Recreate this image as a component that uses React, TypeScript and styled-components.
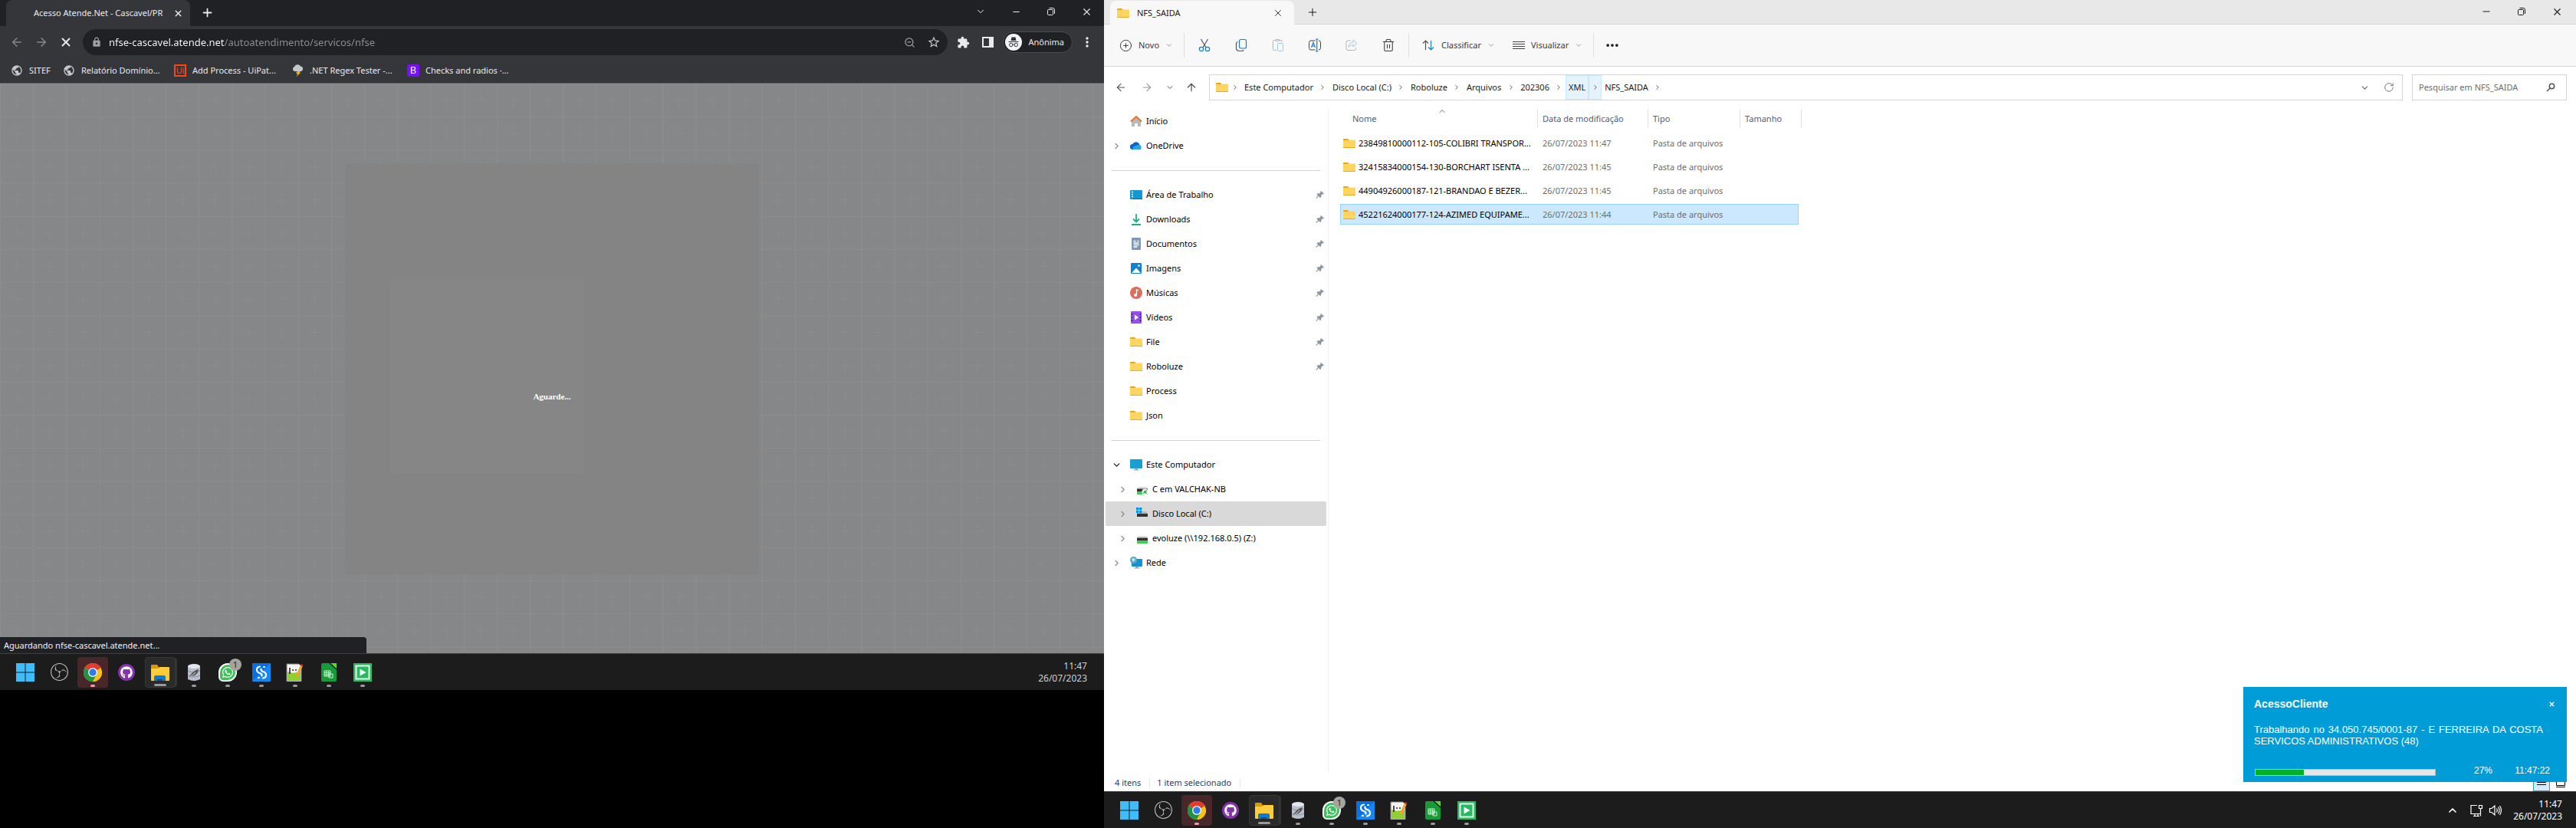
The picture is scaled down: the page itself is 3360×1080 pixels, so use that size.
import React, { ReactNode } from "react";
import styled, { createGlobalStyle, css } from "styled-components";
import {
  ArrowLeft,
  ArrowRight,
  ArrowUp,
  ChevronDown,
  ChevronRight,
  ChevronUp,
  CirclePlus,
  Ellipsis,
  Minus,
  Plus,
  RotateCw,
  Trash2,
  X,
  ZoomOut,
} from "lucide-react";
import { MdExtension, MdLock, MdMoreVert, MdPublic, MdStarBorder } from "react-icons/md";
import { FaGithub, FaWhatsapp } from "react-icons/fa";
import { SiObsstudio } from "react-icons/si";

const ui = '"Noto Sans", "Open Sans", sans-serif';
const arial = '"Liberation Sans", Arial, sans-serif';

const GlobalStyle = createGlobalStyle`
  *, *::before, *::after { box-sizing: border-box; }
  body { margin: 0; background: #000; font: 11px/16px ${ui}; }
  button, input { margin: 0; padding: 0; border: 0; background: none; color: inherit; font: inherit; }
  svg { display: block; flex: none; }
  a { color: inherit; text-decoration: none; }
`;

/* ---------- desktop ---------- */

const Desktop = styled.main`
  display: grid;
  grid-template-columns: 3fr 4fr;
  align-items: start;
`;

const Screen = styled.section<{ $ratio: string }>`
  position: relative;
  display: flex;
  flex-direction: column;
  min-width: 0;
  aspect-ratio: ${(p) => p.$ratio};
`;

/* ---------- shared ---------- */

const IconButton = styled.button<{ $w?: number }>`
  display: flex;
  align-items: center;
  justify-content: center;
  width: ${(p) => p.$w ?? 32}px;
  height: 32px;
  flex: none;
`;

const Spacer = styled.div`
  flex: 1;
`;

/* ---------- browser ---------- */

const Browser = styled.article`
  flex: 1;
  display: flex;
  flex-direction: column;
  min-height: 0;
  background: #35363a;
  color: #e8eaed;
`;

const TabStrip = styled.header`
  display: flex;
  height: 34px;
  padding-left: 8px;
  background: #202124;
`;

const BrowserTab = styled.div`
  display: flex;
  align-items: center;
  width: 240px;
  padding: 0 4px 0 36px;
  border-radius: 8px 8px 0 0;
  background: #35363a;
`;

const TabTitle = styled.span`
  flex: 1;
  white-space: nowrap;
`;

const WindowControls = styled.div<{ $pad: number }>`
  display: flex;
  height: 30px;
  padding-right: ${(p) => p.$pad}px;
  align-items: center;
`;

const BrowserBar = styled.div`
  display: flex;
  align-items: center;
  height: 42px;
  padding: 0 6px;
`;

const Omnibox = styled.form`
  flex: 1;
  display: flex;
  align-items: center;
  height: 34px;
  margin: 0 4px 0 6px;
  padding: 0 2px 0 11px;
  border-radius: 17px;
  background: #202124;
  color: #9aa0a6;
`;

/* host in white, path dimmed */
const UrlInput = styled.input`
  flex: 1;
  min-width: 0;
  height: 32px;
  margin-left: 9px;
  outline: 0;
  font-size: 13px;
  background: linear-gradient(90deg, #fff 0 150px, #8d9196 150px);
  background-clip: text;
  -webkit-background-clip: text;
  color: transparent;
`;

const Profile = styled.button`
  display: flex;
  align-items: center;
  gap: 8px;
  height: 28px;
  margin: 0 3px 0 4px;
  padding: 0 10px 0 2px;
  border: 1px solid #4a4b4f;
  border-radius: 14px;
  background: #202124;
`;

const Bookmarks = styled.nav`
  display: flex;
  height: 33px;
  padding: 0 14px;
  align-items: center;
  border-bottom: 1px solid #5c5d60;
`;

const Bookmark = styled.a<{ $w: number }>`
  display: flex;
  align-items: center;
  gap: 8px;
  width: ${(p) => p.$w}px;
  white-space: nowrap;
`;

const Page = styled.div`
  position: relative;
  flex: 1;
  display: flex;
  align-items: center;
  justify-content: center;
  overflow: hidden;
  background: #868788;
`;

const Backdrop = styled.svg`
  position: absolute;
  inset: 0;
  width: 100%;
  height: 100%;
`;

const LoadingPanel = styled.div`
  position: relative;
  display: flex;
  align-items: center;
  justify-content: center;
  width: 540px;
  height: 536px;
  background: linear-gradient(#868686, #868686) 59px 151px / 253px 254px no-repeat #848484;
`;

const LoadingText = styled.p`
  margin: 0;
  padding-top: 72px;
  color: #fff;
  font: bold 11px/16px "Liberation Serif", serif;
`;

const LoadStatus = styled.output`
  position: absolute;
  left: 0;
  bottom: 0;
  width: 478px;
  height: 21px;
  padding: 0 5px;
  border-top-right-radius: 4px;
  background: #202124;
  color: #f1f1f1;
  line-height: 21px;
`;

/* ---------- taskbar ---------- */

const Bar = styled.footer`
  display: flex;
  align-items: center;
  height: 48px;
  flex: none;
  padding: 0 18px 0 13px;
  border-top: 1px solid #3f3f3f;
  background: #1c1c1c;
  color: #fff;
`;

const Apps = styled.nav`
  display: flex;
  gap: 4px;
`;

const AppButton = styled.button<{ $tint?: string; $stack?: boolean }>`
  position: relative;
  display: flex;
  align-items: center;
  justify-content: center;
  width: 40px;
  height: 40px;
  border-radius: 4px;
  background: ${(p) => p.$tint ?? "transparent"};
  ${(p) => p.$stack && css`border: 1px solid #383838; box-shadow: 3px 0 0 -1px #333;`}
`;

const Running = styled.i<{ $color?: string; $wide?: boolean }>`
  position: absolute;
  bottom: 1px;
  width: ${(p) => (p.$wide ? 16 : 6)}px;
  height: 3px;
  border-radius: 2px;
  background: ${(p) => p.$color ?? "#9a9a9a"};
`;

const Badge = styled.b`
  position: absolute;
  top: 2px;
  right: 2px;
  width: 16px;
  height: 16px;
  border-radius: 8px;
  background: #a3a3a0;
  color: #222;
  font-weight: 400;
`;

const Tray = styled.div`
  display: flex;
  align-items: center;
  gap: 6px;
  margin-right: 14px;
`;

const TrayToggle = styled.button`
  margin-right: 9px;
`;

const Clock = styled.time<{ $dim?: boolean }>`
  color: ${(p) => (p.$dim ? "#cfcfcf" : "#fff")};
  font-size: 12px;
  text-align: right;
  margin-right: ${(p) => (p.$dim ? 4 : 0)}px;
`;

/* ---------- file explorer ---------- */

const Explorer = styled.article`
  flex: 1;
  display: flex;
  flex-direction: column;
  min-height: 0;
  background: #fff;
  color: #1b1b1b;
`;

const ExplorerTabs = styled.header`
  display: flex;
  height: 32px;
  padding-left: 8px;
  background: #e8e8e8;
  box-shadow: inset 0 -1px #d6d6d6;
`;

const ExplorerTab = styled.div`
  display: flex;
  align-items: center;
  gap: 10px;
  width: 240px;
  margin-top: 1px;
  padding: 0 5px 0 9px;
  border-radius: 8px 8px 0 0;
  background: #f8f8f8;
`;

const CommandBar = styled.div`
  display: flex;
  align-items: center;
  height: 55px;
  padding-left: 20px;
  border-bottom: 1px solid #d6d6d6;
  background: #f8f8f8;
`;

const Command = styled.button<{ $w: number }>`
  display: flex;
  align-items: center;
  gap: 8px;
  width: ${(p) => p.$w}px;
  height: 32px;
  color: #3a3a3a;
`;

const CommandSeparator = styled.div`
  width: 1px;
  height: 32px;
  background: #dedede;
`;

const IconCommands = styled.div`
  display: flex;
  gap: 16px;
  padding: 0 10px;
`;

const ViewCommands = styled.div`
  display: flex;
  padding-left: 16px;
`;

const AddressRow = styled.div`
  display: flex;
  padding: 10px 12px 10px 6px;
  gap: 12px;
`;

const NavButtons = styled.div`
  display: flex;
  align-items: center;
  width: 119px;
`;

const AddressBar = styled.nav`
  flex: 1;
  display: flex;
  align-items: center;
  height: 34px;
  padding: 0 1px 0 8px;
  border: 1px solid #d6d6d6;
`;

const Crumb = styled.a<{ $on?: boolean }>`
  padding: 0 4px;
  line-height: 32px;
  ${(p) => p.$on && css`background: #e5f3ff; box-shadow: inset 0 0 0 1px #cce8ff;`}
`;

const CrumbArrow = styled.button<{ $on?: boolean }>`
  display: flex;
  align-items: center;
  justify-content: center;
  width: 17px;
  height: 32px;
  ${(p) => p.$on && css`background: #e5f3ff; box-shadow: inset 0 0 0 1px #cce8ff;`}
`;

const Search = styled.form`
  display: flex;
  align-items: center;
  width: 202px;
  padding: 0 14px 0 8px;
  border: 1px solid #d6d6d6;
`;

const SearchInput = styled.input`
  flex: 1;
  min-width: 0;
  outline: 0;
  &::placeholder { color: #6d6d6d; opacity: 1; }
`;

const Body = styled.div`
  flex: 1;
  display: flex;
  min-height: 0;
  padding-top: 1px;
`;

const Sidebar = styled.nav`
  width: 293px;
  flex: none;
  border-right: 1px solid #f0f0f0;
`;

const TreeRow = styled.button<{ $child?: boolean; $on?: boolean }>`
  display: flex;
  align-items: center;
  width: 288px;
  height: 32px;
  margin-left: 2px;
  padding: 0 2px 0 ${(p) => (p.$child ? 16 : 8)}px;
  border-radius: 2px;
  background: ${(p) => (p.$on ? "#d9d9d9" : "transparent")};
  color: #000;
`;

const TreeArrow = styled.span`
  width: 24px;
`;

const TreeLabel = styled.span`
  flex: 1;
  margin-left: 5px;
  text-align: left;
`;

const TreeDivider = styled.hr`
  height: 1px;
  margin: 16px 10px 15px;
  border: 0;
  background: #d2d2d2;
`;

const Files = styled.div`
  flex: 1;
  padding-left: 15px;
`;

const FileTable = styled.table`
  display: block;
`;

const Group = styled.thead`
  display: block;
`;

const Rows = styled.tbody`
  display: block;
`;

const columns = css`
  display: grid;
  grid-template-columns: 258px 144px 120px 1fr;
`;

const HeadRow = styled.tr`
  ${columns}
  width: 602px;
  margin-bottom: 6px;
`;

const Head = styled.th<{ $first?: boolean }>`
  position: relative;
  height: 25px;
  padding: 0 0 0 ${(p) => (p.$first ? 16 : 6)}px;
  border-right: 1px solid #e2e2e2;
  color: #4c607a;
  font-weight: 400;
  line-height: 26px;
  text-align: left;
`;

const SortMark = styled(ChevronUp)`
  position: absolute;
  top: -3px;
  left: 127px;
`;

const FileRow = styled.tr<{ $on?: boolean }>`
  ${columns}
  width: 598px;
  height: 27px;
  margin-bottom: 4px;
  ${(p) => p.$on && css`background: #cce8ff; box-shadow: inset 0 0 0 1px #99d1ff;`}
`;

const NameCell = styled.td`
  display: flex;
  align-items: center;
  gap: 4px;
  padding: 0 0 0 4px;
  color: #000;
  white-space: nowrap;
`;

const DataCell = styled.td`
  padding: 0 0 0 6px;
  color: #6d6d6d;
  line-height: 27px;
`;

const StatusBar = styled.div`
  display: flex;
  align-items: center;
  height: 24px;
  padding: 2px 9px 0 14px;
  color: #26406b;
`;

const StatusItem = styled.span`
  margin-right: 9px;
  padding-right: 11px;
  border-right: 1px solid #e6e6e6;
  line-height: 12px;
`;

const ViewButton = styled.button<{ $on?: boolean }>`
  display: flex;
  align-items: center;
  justify-content: center;
  width: 22px;
  height: 22px;
  margin-left: 3px;
  ${(p) => p.$on && css`border: 1px solid #26a0da; background: #d5ecf8;`}
`;

/* ---------- toast ---------- */

const Toast = styled.aside`
  position: absolute;
  right: 12px;
  bottom: 60px;
  width: 422px;
  height: 124px;
  padding: 14px 15px 10px 14px;
  background: #009cd8;
  color: #fff;
  font: 13px/15px ${arial};
`;

const ToastHead = styled.div`
  display: flex;
  align-items: center;
  justify-content: space-between;
`;

const ToastTitle = styled.h2`
  margin: 0;
  font: bold 14px/16px ${arial};
`;

const ToastText = styled.p`
  margin: 18px 16px 0 0;
  text-align: justify;
`;

const ToastFoot = styled.div`
  display: flex;
  align-items: center;
  margin-top: 24px;
  padding-right: 7px;
  font-size: 12px;
`;

const Progress = styled.div`
  width: 236px;
  height: 9px;
  margin: 4px 50px 0 1px;
  border: 1px solid #bcbcbc;
  background: #e6e6e6;
`;

const ProgressFill = styled.div`
  height: 100%;
  background: #06b025;
`;

/* ---------- drawings ---------- */

const Folder = ({ size = 16 }: { size?: number }) => (
  <svg width={size} height={size} viewBox="0 0 16 16">
    <path d="M0 3a1 1 0 0 1 1-1h5l2 2.500H0z" fill="#f2a50c" />
    <path d="M0 4.500h7l1-1h7a1 1 0 0 1 1 1V13a1 1 0 0 1-1 1H1a1 1 0 0 1-1-1z" fill="#ffd562" />
    <path d="M0 13a1 1 0 0 0 1 1h14a1 1 0 0 0 1-1z" fill="#eeaa1f" />
  </svg>
);

const Restore = () => (
  <svg width="12" height="12" viewBox="0 0 12 12" fill="none" stroke="currentColor">
    <rect x="1.500" y="3.500" width="7" height="7" rx="1" />
    <path d="M3.500 1.500H8a2.500 2.500 0 0 1 2.500 2.500v5" />
  </svg>
);

const Pin = () => (
  <svg width="12" height="12" viewBox="0 0 12 12" fill="#8b979e">
    <path d="M7 1l4 3.500-1 .8-.8-.2L7.300 7l-.3 2.500-1 .5-2-2L1 11l-.8-.3L3 7 1.500 5.500l.6-.9L5 4.200l1.700-1.700-.3-.8z" />
  </svg>
);

const SidePanel = () => (
  <svg width="15" height="14" viewBox="0 0 15 14">
    <rect width="15" height="14" fill="#e8eaed" />
    <rect x="2" y="2" width="7" height="10" fill="#35363a" />
  </svg>
);

const Incognito = () => (
  <svg width="22" height="22" viewBox="0 0 22 22">
    <circle cx="11" cy="11" r="11" fill="#f1f3f4" />
    <path d="M7.500 9L8.500 4.500h5L14.500 9z" fill="#303134" />
    <path d="M4.500 10.500h13" stroke="#303134" />
    <g fill="none" stroke="#303134">
      <circle cx="7.700" cy="14.500" r="2.200" />
      <circle cx="14.300" cy="14.500" r="2.200" />
      <path d="M9.900 14.200h2.200" />
    </g>
  </svg>
);

const UiMark = () => (
  <svg width="16" height="16" viewBox="0 0 16 16">
    <rect x="1" y="1" width="14" height="14" fill="none" stroke="#fa4616" strokeWidth="2" />
    <text x="8" y="12" textAnchor="middle" fontFamily={arial} fontSize="11" fill="#fa4616">Ui</text>
  </svg>
);

const Storm = () => (
  <svg width="16" height="16" viewBox="0 0 16 16">
    <path d="M8.500 7.500h4l-2 3h2L6.500 16l1.700-4H6z" fill="#f7b500" />
    <path d="M4 9a3.200 3.200 0 0 1 0-6 4.500 4.500 0 0 1 8-.5A3.300 3.300 0 0 1 12.500 9z" fill="#c3c8cc" />
  </svg>
);

const BMark = () => (
  <svg width="16" height="16" viewBox="0 0 16 16">
    <rect width="16" height="16" rx="2" fill="#7411f5" />
    <text x="8" y="12" textAnchor="middle" fontFamily={arial} fontSize="12" fill="#fff">B</text>
  </svg>
);

const Cut = () => (
  <svg width="18" height="18" viewBox="0 0 18 18" fill="none" strokeWidth="1.200">
    <path d="M4.500 1l6.500 11M13.500 1L7 12" stroke="#555" />
    <circle cx="5" cy="14" r="2.700" stroke="#1a7ccf" />
    <circle cx="13" cy="14" r="2.700" stroke="#1a7ccf" />
  </svg>
);

const CopyIcon = () => (
  <svg width="18" height="18" viewBox="0 0 18 18" fill="none" strokeWidth="1.200">
    <rect x="6.500" y="1.500" width="9" height="11.500" rx="2" stroke="#1a7ccf" />
    <path d="M4.500 4.500q-2 .5-2 2v6q0 4 4 4H10q1.500 0 2-1.500" stroke="#555" />
  </svg>
);

const Sort = () => (
  <svg width="18" height="18" viewBox="0 0 18 18" fill="none" strokeWidth="1.200">
    <path d="M5.500 15V3M2 6.500L5.500 3 9 6.500" stroke="#555" />
    <path d="M12.500 3v12M9 11.500l3.500 3.500 3.500-3.500" stroke="#1a7ccf" />
  </svg>
);

const Rename = () => (
  <svg width="18" height="18" viewBox="0 0 18 18" fill="none">
    <path d="M9.500 3H4a2.500 2.500 0 0 0-2.500 2.500v7A2.500 2.500 0 0 0 4 15h5.500M14 3q2.500 0 2.500 2.500v7Q16.500 15 14 15" stroke="#444" />
    <path d="M4.500 12L7 5.500 9.500 12M5.500 10h3M11.700 1v16M10 1h3.500M10 17h3.500" stroke="#1a7ccf" strokeWidth="1.200" />
  </svg>
);

const Paste = () => (
  <svg width="18" height="18" viewBox="0 0 18 18" fill="none">
    <path d="M7 15.500H3.500a1 1 0 0 1-1-1v-11a1 1 0 0 1 1-1H6M10.500 2.500H13a1 1 0 0 1 1 1V5M6 1.500h4.500v2H6z" stroke="#b5b5b5" />
    <rect x="8.500" y="6.500" width="7" height="10" rx="1" stroke="#9dc8ea" />
  </svg>
);

const Share = () => (
  <svg width="18" height="18" viewBox="0 0 18 18" fill="none">
    <path d="M8 3H4a2 2 0 0 0-2 2v8.500a2 2 0 0 0 2 2h8.500a2 2 0 0 0 2-2V12" stroke="#b5b5b5" />
    <path d="M11 2l5 4.500-5 4.500V8.500Q7 8.500 5 11.500 5.500 5.500 11 5z" stroke="#9dc8ea" />
  </svg>
);

const Lines = () => (
  <svg width="16" height="16" viewBox="0 0 16 16" stroke="#444">
    <path d="M0 3.500h16M0 6.500h16M0 9.500h16M0 12.500h16" />
  </svg>
);

const SearchGlyph = () => (
  <svg width="12" height="12" viewBox="0 0 12 12" fill="none" stroke="#555" strokeWidth="1.500">
    <circle cx="7.500" cy="4.500" r="3.200" />
    <path d="M5.200 7L1 11" />
  </svg>
);

type GlyphName =
  | "home" | "cloud" | "desktop" | "download" | "doc" | "image" | "music"
  | "video" | "folder" | "pc" | "netdrive" | "disk" | "share" | "network";

const glyphs: Record<GlyphName, ReactNode> = {
  home: (
    <>
      <path d="M2 7l6-5 6 5v8h-4v-4H6v4H2z" fill="#b9b9b9" />
      <path d="M1 8.500L8 2l7 6.500" fill="none" stroke="#e8702a" strokeWidth="2" />
    </>
  ),
  cloud: (
    <>
      <path d="M3.500 13a3.500 3.500 0 0 1-.3-7 5 5 0 0 1 8.800-.3L14 13z" fill="#0a66c2" />
      <path d="M4 13a3 3 0 0 1 1-4l4-1.500 3-.8A3.300 3.300 0 0 1 12.800 13z" fill="#28a8ea" />
    </>
  ),
  desktop: (
    <>
      <rect y="2" width="16" height="12" rx="1" fill="#1597d3" />
      <path d="M2 4.500h2M2 7.500h2M2 10.500h2" stroke="#fff" strokeWidth="1.500" />
      <path d="M4 13.500h12" stroke="#0b6aa8" />
    </>
  ),
  download: (
    <path d="M8 1v10M4 7.500L8 11.500l4-4M2 15h12" fill="none" stroke="#1fae87" strokeWidth="1.800" />
  ),
  doc: (
    <>
      <rect x="2" width="12" height="16" rx="1" fill="#7f99b6" />
      <path d="M4.500 4.500h3M4.500 7h7M4.500 9.500h7M4.500 12h5M9.500 4.500h2" stroke="#fff" strokeWidth="1.300" />
    </>
  ),
  image: (
    <>
      <rect x="1" y="1" width="14" height="14" rx="1" fill="#1080d4" />
      <path d="M2 14l6-6.500 6 6.500z" fill="#fff" />
      <circle cx="11.500" cy="4.500" r="1.300" fill="#fff" />
    </>
  ),
  music: (
    <>
      <circle cx="8" cy="8" r="8" fill="#d9705f" />
      <circle cx="7" cy="11" r="2" fill="#fff" />
      <path d="M8.500 11V4l2.500 1" fill="none" stroke="#fff" strokeWidth="1.300" />
    </>
  ),
  video: (
    <>
      <rect x="1" width="14" height="16" rx="1" fill="#9350e8" />
      <path d="M2.500 3v11M13.500 3v11" stroke="#3d1d78" strokeWidth="1.500" strokeDasharray="2 2" />
      <path d="M6 4.500l5 3.500-5 3.500z" fill="#fff" />
    </>
  ),
  folder: <Folder />,
  pc: (
    <>
      <rect y="1" width="16" height="12" rx="1" fill="#1a9fd4" />
      <path d="M6.500 13h3v1.500h2v1h-7v-1h2z" fill="#8fa3b0" />
    </>
  ),
  netdrive: (
    <>
      <path d="M3 5h10l2 3H1z" fill="#d9dde0" />
      <path d="M1 7.500h14V11H1z" fill="#333" />
      <path d="M1 11h14v4H1z" fill="#3ccf5c" />
      <circle cx="11.500" cy="11.500" r="4" fill="#eef2ee" />
      <path d="M9.500 13.500l4-4M10 10.500l1 1M12 12l1.500 1.500" stroke="#2e9b3e" strokeWidth="1.300" />
    </>
  ),
  disk: (
    <>
      <path d="M8 5h5l2 3H1z" fill="#b4b8bb" />
      <path d="M0 0h3.300v3.300H0zM4 0h3.300v3.300H4zM0 4h3.300v3.300H0zM4 4h3.300v3.300H4z" fill="#0f8de0" />
      <path d="M1 8h14v4H1z" fill="#333" />
    </>
  ),
  share: (
    <>
      <path d="M3 5h10l2 3H1z" fill="#d9dde0" />
      <path d="M1 7.500h14V11H1z" fill="#333" />
      <path d="M1 11h14v4H1z" fill="#3ccf5c" />
    </>
  ),
  network: (
    <>
      <rect x="2" y="3" width="14" height="10" rx="1" fill="#1790cf" />
      <path d="M7.500 13h3v1.500h2v1h-7v-1h2z" fill="#8fa3b0" />
      <circle cx="4.500" cy="4.500" r="4.500" fill="#5da7c9" />
      <path d="M2 3l3-1 2 2-3 3z" fill="#cfe9f2" />
    </>
  ),
};

const Glyph = ({ name }: { name: GlyphName }) => (
  <svg width="16" height="16" viewBox="0 0 16 16">{glyphs[name]}</svg>
);

const appDrawings: Record<string, ReactNode> = {
  windows: <path d="M0 0h11.500v11.500H0zM12.500 0H24v11.500H12.500zM0 12.500h11.500V24H0zM12.500 12.500H24V24H12.500z" fill="#3fbdfb" />,
  chrome: (
    <>
      <circle cx="12" cy="12" r="12" fill="#fbc116" />
      <path d="M12 12L1.600 6A12 12 0 0 1 22.400 6z" fill="#e33b2e" />
      <path d="M12 12L1.600 6A12 12 0 0 0 12 24l5.200-9z" fill="#229342" />
      <path d="M12 12h12A12 12 0 0 1 12 24l5.200-9z" fill="#fbc116" />
      <path d="M12 6h10.400L17 9z" fill="#e33b2e" />
      <circle cx="12" cy="12" r="6" fill="#fff" />
      <circle cx="12" cy="12" r="4.700" fill="#2f7de9" />
    </>
  ),
  explorer: (
    <>
      <path d="M0 3a1 1 0 0 1 1-1h7l2 3v3H0z" fill="#d99a06" />
      <path d="M0 7h9l2-2h12a1 1 0 0 1 1 1v16a1 1 0 0 1-1 1H1a1 1 0 0 1-1-1z" fill="#ffcc3d" />
      <path d="M4 23v-5q0-2 2-2h11q2 0 2 2v5z" fill="#0f7bd0" />
      <path d="M8 21h7v2H8z" fill="#0a4f94" />
    </>
  ),
  database: (
    <>
      <path d="M4 4v17q8 4 16 0V4z" fill="#b9bfcb" />
      <ellipse cx="12" cy="4" rx="8" ry="3" fill="#e3e6ee" />
      <path d="M4 10q8 4 16 0M4 16q8 4 16 0" fill="none" stroke="#8a90a0" />
      <path d="M5 20Q9 10 18 8q-1 8-9 9z" fill="#555" />
      <path d="M6 19l8-7" stroke="#ddd" />
    </>
  ),
  hooks: (
    <>
      <rect width="24" height="24" fill="#0b6fe0" />
      <path d="M0 24L24 0v24z" fill="#1787f0" />
      <g fill="none" stroke="#fff" strokeWidth="2.200" strokeLinecap="round">
        <path d="M10 4.500Q6 5 6 8.500t4 4.500q3 1 2.500 3.500" />
        <path d="M14 19.500q4-.5 4-4T14 11q-3-1-2.500-3.500" />
        <path d="M15 5h1M8 19h1" />
      </g>
    </>
  ),
  notepad: (
    <>
      <path d="M1 1h16l3 3v20H1z" fill="#f4f4f0" stroke="#777" />
      <path d="M2 11q9 4 17-1v13H2z" fill="#8fcf2f" />
      <path d="M5 6v8M8 9h2M12 9h2" stroke="#222" strokeWidth="1.600" />
      <path d="M14 17L21 2" stroke="#f1a429" strokeWidth="3" />
      <path d="M20.300 3.500L21.200 1.600" stroke="#b3261e" strokeWidth="3" />
    </>
  ),
  calc: (
    <>
      <path d="M4 0h10l8 8v14a2 2 0 0 1-2 2H4a2 2 0 0 1-2-2V2a2 2 0 0 1 2-2z" fill="#18993a" />
      <path d="M13 0h9v8z" fill="#5fd23f" />
      <path d="M13 0l9 8" stroke="#0d2412" strokeWidth="1.500" />
      <path d="M6 10h8v7H6zM6 12.500h8M6 15h8M8.700 10v7M11.300 10v7M12 14h5v5h-5z" fill="none" stroke="#c9f2cf" />
    </>
  ),
  play: (
    <>
      <rect width="24" height="24" fill="#27ba62" />
      <rect x="3.500" y="3.500" width="17" height="17" fill="none" stroke="#e7f8ed" strokeWidth="2" />
      <path d="M8.500 7.500l8 4.500-8 4.500z" fill="#fff" />
    </>
  ),
};

const AppDrawing = ({ name }: { name: string }) => (
  <svg width="24" height="24" viewBox="0 0 24 24">{appDrawings[name]}</svg>
);

const GithubBadge = styled.span`
  display: flex;
  padding: 3px;
  border-radius: 50%;
  background: #8534a8;
`;

const WhatsappBadge = styled.span`
  display: flex;
  padding: 2px;
  border: 2px solid #fff;
  border-radius: 50% 50% 50% 6px;
  background: #3ec15a;
`;

const TaskbarApps = () => (
  <Apps aria-label="Aplicativos">
    <AppButton aria-label="Iniciar"><AppDrawing name="windows" /></AppButton>
    <AppButton aria-label="OBS"><SiObsstudio size={23} color="#c6c3c8" /></AppButton>
    <AppButton aria-label="Chrome" $tint="#472729"><AppDrawing name="chrome" /><Running $color="#f79aa6" /></AppButton>
    <AppButton aria-label="GitHub"><GithubBadge><FaGithub size={16} /></GithubBadge></AppButton>
    <AppButton aria-label="Explorador" $tint="#2a2a2a" $stack><AppDrawing name="explorer" /><Running $wide /></AppButton>
    <AppButton aria-label="SQLite"><AppDrawing name="database" /><Running /></AppButton>
    <AppButton aria-label="WhatsApp"><WhatsappBadge><FaWhatsapp size={16} /></WhatsappBadge><Badge>1</Badge><Running /></AppButton>
    <AppButton aria-label="Automação"><AppDrawing name="hooks" /><Running /></AppButton>
    <AppButton aria-label="Notepad++"><AppDrawing name="notepad" /><Running /></AppButton>
    <AppButton aria-label="Calc"><AppDrawing name="calc" /><Running /></AppButton>
    <AppButton aria-label="Reprodutor"><AppDrawing name="play" /><Running /></AppButton>
  </Apps>
);

const Taskbar = ({ tray }: { tray?: boolean }) => (
  <Bar>
    <TaskbarApps />
    <Spacer />
    {tray && (
      <Tray>
        <TrayToggle aria-label="Mostrar ícones ocultos"><ChevronUp size={16} strokeWidth={2.5} /></TrayToggle>
        <svg width="18" height="18" viewBox="12 0 18 18" fill="none" stroke="#fff" strokeWidth="1.200">
          <path d="M21 2.500h-8v11h12M16 16.500h8M18 14v2.500M22 14v2.500M23.500 2.500h4v4h-4zM25.500 6.500v10" />
        </svg>
        <svg width="18" height="16" viewBox="0 0 18 16" fill="none" stroke="#fff" strokeWidth="1.200">
          <path d="M1.500 5.500H4L8 2v12L4 10.500H1.500zM10.500 5.500q1.500 2.500 0 5M12.500 3.500q3 4.500 0 9M14.500 2q4 6 0 12" />
        </svg>
      </Tray>
    )}
    <Clock $dim={!tray}>
      11:47
      <br />
      26/07/2023
    </Clock>
  </Bar>
);

/* ---------- data ---------- */

const bookmarks: { label: string; width: number; icon: ReactNode }[] = [
  { label: "SITEF", width: 68, icon: <MdPublic size={16} color="#c4c7cc" /> },
  { label: "Relatório Domínio...", width: 145, icon: <MdPublic size={16} color="#c4c7cc" /> },
  { label: "Add Process - UiPat...", width: 153, icon: <UiMark /> },
  { label: ".NET Regex Tester -...", width: 151, icon: <Storm /> },
  { label: "Checks and radios ·...", width: 150, icon: <BMark /> },
];

const crumbs = ["Este Computador", "Disco Local (C:)", "Roboluze", "Arquivos", "202306", "XML", "NFS_SAIDA"];

type Node = { label: string; icon: GlyphName; pin?: boolean; arrow?: "right" | "down"; child?: boolean; on?: boolean };

const tree: Node[][] = [
  [
    { label: "Início", icon: "home" },
    { label: "OneDrive", icon: "cloud", arrow: "right" },
  ],
  [
    { label: "Área de Trabalho", icon: "desktop", pin: true },
    { label: "Downloads", icon: "download", pin: true },
    { label: "Documentos", icon: "doc", pin: true },
    { label: "Imagens", icon: "image", pin: true },
    { label: "Músicas", icon: "music", pin: true },
    { label: "Vídeos", icon: "video", pin: true },
    { label: "File", icon: "folder", pin: true },
    { label: "Roboluze", icon: "folder", pin: true },
    { label: "Process", icon: "folder" },
    { label: "Json", icon: "folder" },
  ],
  [
    { label: "Este Computador", icon: "pc", arrow: "down" },
    { label: "C em VALCHAK-NB", icon: "netdrive", arrow: "right", child: true },
    { label: "Disco Local (C:)", icon: "disk", arrow: "right", child: true, on: true },
    { label: "evoluze (\\\\192.168.0.5) (Z:)", icon: "share", arrow: "right", child: true },
    { label: "Rede", icon: "network", arrow: "right" },
  ],
];

const files = [
  { name: "23849810000112-105-COLIBRI TRANSPOR...", date: "26/07/2023 11:47" },
  { name: "32415834000154-130-BORCHART ISENTA ...", date: "26/07/2023 11:45" },
  { name: "44904926000187-121-BRANDAO E BEZER...", date: "26/07/2023 11:45" },
  { name: "45221624000177-124-AZIMED EQUIPAME...", date: "26/07/2023 11:44", on: true },
];

/* ---------- windows ---------- */

const BrowserWindow = () => (
  <Browser>
    <TabStrip>
      <BrowserTab>
        <TabTitle>Acesso Atende.Net - Cascavel/PR</TabTitle>
        <IconButton $w={24} aria-label="Fechar guia"><X size={13} strokeWidth={2.5} /></IconButton>
      </BrowserTab>
      <IconButton $w={44} aria-label="Nova guia"><Plus size={17} strokeWidth={2.5} /></IconButton>
      <Spacer />
      <WindowControls $pad={0}>
        <IconButton $w={46} aria-label="Pesquisar guias"><ChevronDown size={14} strokeWidth={1.7} /></IconButton>
        <IconButton $w={46} aria-label="Minimizar"><Minus size={13} /></IconButton>
        <IconButton $w={46} aria-label="Restaurar"><Restore /></IconButton>
        <IconButton $w={46} aria-label="Fechar"><X size={15} strokeWidth={1.7} /></IconButton>
      </WindowControls>
    </TabStrip>
    <BrowserBar>
      <IconButton aria-label="Voltar"><ArrowLeft size={18} color="#85878a" /></IconButton>
      <IconButton aria-label="Avançar"><ArrowRight size={18} color="#85878a" /></IconButton>
      <IconButton aria-label="Parar"><X size={18} strokeWidth={2.5} /></IconButton>
      <Omnibox>
        <MdLock size={14} />
        <UrlInput aria-label="Endereço" defaultValue="nfse-cascavel.atende.net/autoatendimento/servicos/nfse" />
        <IconButton type="button" aria-label="Zoom"><ZoomOut size={15} /></IconButton>
        <IconButton type="button" aria-label="Favoritar"><MdStarBorder size={18} color="#c4c7cc" /></IconButton>
      </Omnibox>
      <IconButton aria-label="Extensões"><MdExtension size={17} /></IconButton>
      <IconButton aria-label="Painel lateral"><SidePanel /></IconButton>
      <Profile><Incognito />Anônima</Profile>
      <IconButton aria-label="Menu"><MdMoreVert size={20} /></IconButton>
    </BrowserBar>
    <Bookmarks aria-label="Favoritos">
      {bookmarks.map((b) => (
        <Bookmark key={b.label} href="#" $w={b.width}>{b.icon}{b.label}</Bookmark>
      ))}
    </Bookmarks>
    <Page>
      <Backdrop aria-hidden="true">
        <defs>
          <pattern id="tiles" width="43.200" height="43.200" patternUnits="userSpaceOnUse">
            <path d="M0 .5h43.200M.5 0v43.200" stroke="#8c8d8d" />
            <path d="M14 22h16M22 14v16" stroke="#8a8b8c" />
          </pattern>
        </defs>
        <rect width="100%" height="100%" fill="url(#tiles)" />
      </Backdrop>
      <LoadingPanel><LoadingText>Aguarde...</LoadingText></LoadingPanel>
      <LoadStatus>Aguardando nfse-cascavel.atende.net...</LoadStatus>
    </Page>
  </Browser>
);

const TreeItem = ({ node }: { node: Node }) => (
  <TreeRow $child={node.child} $on={node.on}>
    <TreeArrow>
      {node.arrow === "right" && <ChevronRight size={13} color="#8a8a8a" />}
      {node.arrow === "down" && <ChevronDown size={13} color="#222" strokeWidth={2.5} />}
    </TreeArrow>
    <Glyph name={node.icon} />
    <TreeLabel>{node.label}</TreeLabel>
    {node.pin && <Pin />}
  </TreeRow>
);

const ExplorerWindow = () => (
  <Explorer>
    <ExplorerTabs>
      <ExplorerTab>
        <Folder />
        <TabTitle>NFS_SAIDA</TabTitle>
        <IconButton aria-label="Fechar guia"><X size={14} strokeWidth={1.5} /></IconButton>
      </ExplorerTab>
      <IconButton $w={48} aria-label="Nova guia"><Plus size={16} strokeWidth={1.5} /></IconButton>
      <Spacer />
      <WindowControls $pad={2}>
        <IconButton $w={46} aria-label="Minimizar"><Minus size={14} /></IconButton>
        <IconButton $w={46} aria-label="Restaurar"><Restore /></IconButton>
        <IconButton $w={46} aria-label="Fechar"><X size={15} strokeWidth={1.7} /></IconButton>
      </WindowControls>
    </ExplorerTabs>
    <CommandBar>
      <Command $w={84}><CirclePlus size={17} strokeWidth={1.4} />Novo<ChevronDown size={10} color="#888" /></Command>
      <CommandSeparator />
      <IconCommands>
        <IconButton aria-label="Recortar"><Cut /></IconButton>
        <IconButton aria-label="Copiar"><CopyIcon /></IconButton>
        <IconButton aria-label="Colar"><Paste /></IconButton>
        <IconButton aria-label="Renomear"><Rename /></IconButton>
        <IconButton aria-label="Compartilhar"><Share /></IconButton>
        <IconButton aria-label="Excluir"><Trash2 size={18} strokeWidth={1.4} color="#3a3a3a" /></IconButton>
      </IconCommands>
      <CommandSeparator />
      <ViewCommands>
        <Command $w={119}><Sort />Classificar<ChevronDown size={10} color="#888" /></Command>
        <Command $w={105}><Lines />Visualizar<ChevronDown size={10} color="#888" /></Command>
      </ViewCommands>
      <CommandSeparator />
      <IconButton $w={48} aria-label="Ver mais"><Ellipsis size={20} strokeWidth={2.5} /></IconButton>
    </CommandBar>
    <AddressRow>
      <NavButtons>
        <IconButton aria-label="Voltar"><ArrowLeft size={16} strokeWidth={1.7} color="#555" /></IconButton>
        <IconButton $w={36} aria-label="Avançar"><ArrowRight size={16} strokeWidth={1.7} color="#999" /></IconButton>
        <IconButton $w={24} aria-label="Locais recentes"><ChevronDown size={12} color="#555" /></IconButton>
        <IconButton $w={32} aria-label="Acima"><ArrowUp size={16} strokeWidth={1.7} color="#444" /></IconButton>
      </NavButtons>
      <AddressBar aria-label="Caminho">
        <Folder />
        <CrumbArrow aria-label="Expandir"><ChevronRight size={10} color="#444" /></CrumbArrow>
        {crumbs.map((c) => (
          <React.Fragment key={c}>
            <Crumb href="#" $on={c === "XML"}>{c}</Crumb>
            <CrumbArrow $on={c === "XML"} aria-label={`Expandir ${c}`}><ChevronRight size={10} color="#444" /></CrumbArrow>
          </React.Fragment>
        ))}
        <Spacer />
        <IconButton aria-label="Histórico"><ChevronDown size={13} color="#666" /></IconButton>
        <IconButton aria-label="Atualizar"><RotateCw size={14} strokeWidth={1.7} color="#777" /></IconButton>
      </AddressBar>
      <Search>
        <SearchInput type="search" aria-label="Pesquisar" placeholder="Pesquisar em NFS_SAIDA" />
        <SearchGlyph />
      </Search>
    </AddressRow>
    <Body>
      <Sidebar aria-label="Painel de navegação">
        {tree.map((group, i) => (
          <React.Fragment key={i}>
            {i > 0 && <TreeDivider />}
            {group.map((node) => <TreeItem key={node.label} node={node} />)}
          </React.Fragment>
        ))}
      </Sidebar>
      <Files>
        <FileTable>
          <Group>
            <HeadRow>
              <Head $first>Nome<SortMark size={12} strokeWidth={1.7} color="#555" /></Head>
              <Head>Data de modificação</Head>
              <Head>Tipo</Head>
              <Head>Tamanho</Head>
            </HeadRow>
          </Group>
          <Rows>
            {files.map((f) => (
              <FileRow key={f.name} $on={f.on}>
                <NameCell><Folder />{f.name}</NameCell>
                <DataCell>{f.date}</DataCell>
                <DataCell>Pasta de arquivos</DataCell>
                <DataCell />
              </FileRow>
            ))}
          </Rows>
        </FileTable>
      </Files>
    </Body>
    <StatusBar>
      <StatusItem>4 itens</StatusItem>
      <StatusItem>1 item selecionado</StatusItem>
      <Spacer />
      <ViewButton $on aria-label="Detalhes">
        <svg width="12" height="12" viewBox="0 0 12 12" stroke="#000"><path d="M0 2.500h12M0 5.500h12M0 8.500h12" /></svg>
      </ViewButton>
      <ViewButton aria-label="Ícones grandes">
        <svg width="14" height="14" viewBox="0 0 14 14" stroke="#000" fill="none"><path d="M1.500 1.500h11v9h-11zM1 12.500h12" /></svg>
      </ViewButton>
    </StatusBar>
  </Explorer>
);

const AccessToast = ({ percent }: { percent: number }) => (
  <Toast>
    <ToastHead>
      <ToastTitle>AcessoCliente</ToastTitle>
      <button aria-label="Fechar aviso"><X size={9} strokeWidth={4} /></button>
    </ToastHead>
    <ToastText>Trabalhando no 34.050.745/0001-87 - E FERREIRA DA COSTA SERVICOS ADMINISTRATIVOS (48)</ToastText>
    <ToastFoot>
      <Progress role="progressbar" aria-valuenow={percent}>
        <ProgressFill style={{ width: `${percent}%` }} />
      </Progress>
      <span>{percent}%</span>
      <Spacer />
      <time>11:47:22</time>
    </ToastFoot>
  </Toast>
);

export default function App() {
  return (
    <>
      <GlobalStyle />
      <Desktop>
        <Screen $ratio="16 / 10">
          <BrowserWindow />
          <Taskbar />
        </Screen>
        <Screen $ratio="16 / 9">
          <ExplorerWindow />
          <Taskbar tray />
          <AccessToast percent={27} />
        </Screen>
      </Desktop>
    </>
  );
}
